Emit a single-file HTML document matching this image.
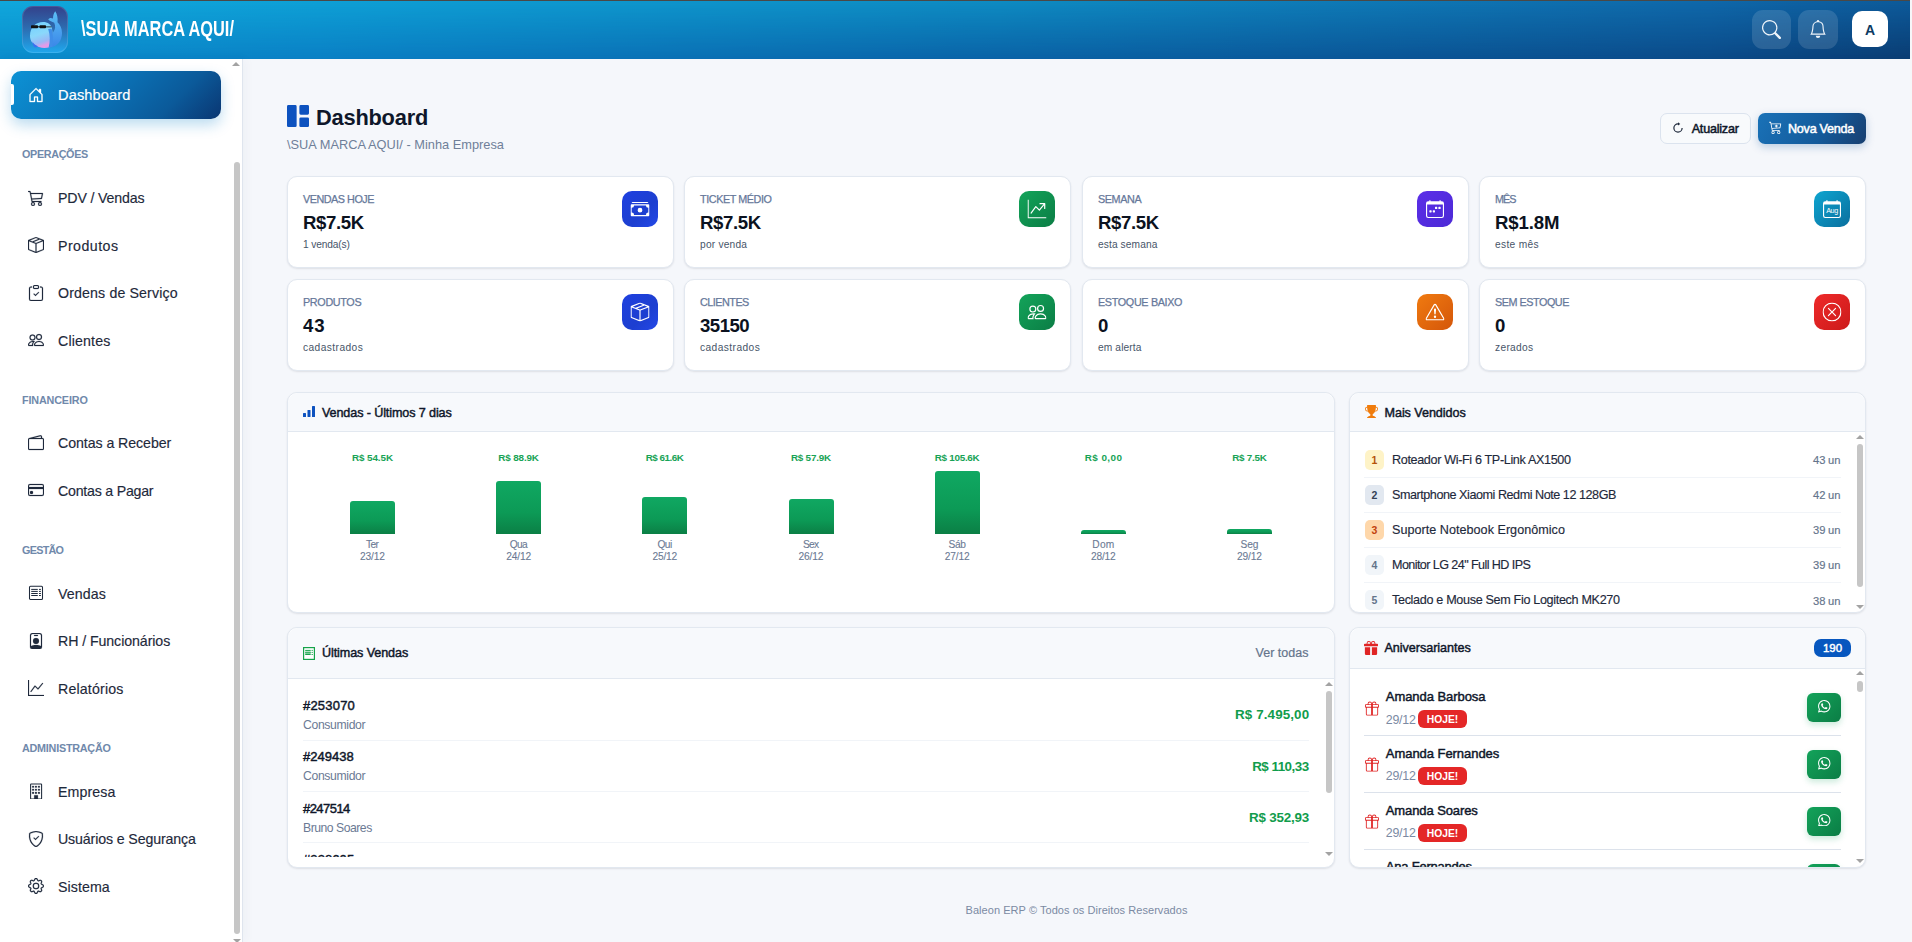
<!DOCTYPE html>
<html lang="pt-br">
<head>
<meta charset="utf-8">
<title>Dashboard</title>
<style>
*{box-sizing:border-box;margin:0;padding:0}
html,body{width:1912px;height:942px;overflow:hidden}
body{font-family:"Liberation Sans",sans-serif;background:#f5f7fb;color:#0f172a;position:relative}
.abs{position:absolute}
.t{position:absolute;white-space:nowrap}
svg{display:block}
#topline{left:0;top:0;width:1912px;height:1px;background:#4a4846}
#rstrip{left:1910px;top:0;width:2px;height:942px;background:#f6f7f9}
#header{left:0;top:1px;width:1910px;height:58px;background:linear-gradient(90deg,#10a8dc 0%,#0ea0d6 16.7%,#0e8bc2 52.3%,#0f68aa 89.5%,#0d5a9a 100%)}
#header:before{content:'';position:absolute;left:0;top:0;width:100%;height:100%;background:linear-gradient(90deg,#0b8ccc 0%,#0a7fc4 16.7%,#0a62a6 52.3%,#0b4a88 89.5%,#0a3c72 100%);-webkit-mask-image:linear-gradient(180deg,transparent 0%,#000 100%);mask-image:linear-gradient(180deg,transparent 0%,#000 100%)}
#sidebar{left:0;top:59px;width:243px;height:883px;background:#fff;border-right:1px solid #dfe5ee;box-shadow:3px 0 10px rgba(30,50,90,.035)}
.logo{left:22px;top:5px;width:46px;height:47px;border-radius:11px;background:linear-gradient(180deg,#34408a 0%,#2d6aae 45%,#1fa8ee 100%);overflow:hidden;box-shadow:0 0 0 1px rgba(255,255,255,.12) inset}
.brand{left:81px;top:15px;font-size:22px;font-weight:700;color:#fff;white-space:nowrap;transform:scaleX(.745);transform-origin:0 0}
.hbtn{top:9px;width:39px;height:39px;border-radius:11px;background:rgba(255,255,255,.13)}
.hbtn svg{position:absolute;left:50%;top:50%;transform:translate(-50%,-50%)}
.avatar{left:1852px;top:10px;width:36px;height:36px;border-radius:10px;background:#fff;color:#0c3a62;font-weight:700;font-size:14px;text-align:center;line-height:38px}
.navact{left:11px;top:71px;width:210px;height:48px;border-radius:10px;background:linear-gradient(135deg,#0c92d5 0%,#0b72b6 45%,#0b5a9a 75%,#0a3672 100%);box-shadow:0 6px 14px rgba(14,130,200,.28)}
.navbar{left:11px;top:84px;width:3px;height:21px;background:#fff;border-radius:0 2px 2px 0}
.ico{position:absolute}
.card{position:absolute;background:#fff;border:1px solid #e2e8f0;border-radius:10px;box-shadow:0 1px 2px rgba(15,23,42,.10)}
.sib{position:absolute;width:36px;height:36px;border-radius:10px}
.sib svg{position:absolute;left:50%;top:50%;transform:translate(-50%,-50%)}
.chead{position:absolute;left:0;top:0;right:0;background:#f7f9fc;border-bottom:1px solid #e2e8f0;border-radius:10px 10px 0 0}
.sbar{position:absolute;background:#c6c6c6;border-radius:3px}
.arr{position:absolute;width:0;height:0;border-left:4px solid transparent;border-right:4px solid transparent}
.arr.up{border-bottom:4px solid #a3a3a3}
.arr.dn{border-top:4px solid #a3a3a3}
</style>
</head>
<body>
<div id="topline" class="abs"></div>
<div id="header" class="abs">
<div class="abs logo"><svg width="46" height="47" viewBox="0 0 46 47">
<defs><linearGradient id="wf" x1="0" y1="0" x2=".3" y2="1"><stop offset="0" stop-color="#6fd0ff"/><stop offset=".55" stop-color="#8ad8fb"/><stop offset=".85" stop-color="#9bb8f5"/><stop offset="1" stop-color="#e29be8"/></linearGradient>
<linearGradient id="wt" x1="0" y1="0" x2="0" y2="1"><stop offset="0" stop-color="#5cc0f5"/><stop offset="1" stop-color="#3a86e8"/></linearGradient></defs>
<path d="M28 41.2 C36 40.5 40 34 40 27 C40 22 38 18.5 35.5 16.2 C36 12 35.2 8 33.2 5.3 C31.6 7.5 31 10 31 12.6 C29 11.6 27 12 26.2 13.6 C27.6 15.2 30 15.8 32.2 16.8 C33.6 20 33.6 23.5 31 26.5 Z" fill="url(#wt)"/>
<path d="M8 30 C8 21 14 16 21 16 C26 16 29 18.5 30 22.5 L30.5 27 C30.2 33 29.2 38 27.5 41.3 C24 42.2 20 42.2 17 41 C11 39 8 35 8 30 Z" fill="url(#wf)"/>
<path d="M26.2 23 C28.2 29 28.2 36 26.6 41.4 L30.4 41 C31.4 35 31.4 28 29.6 22.5 Z" fill="#3f8ee8"/>
<path d="M10.5 35.5 C10.5 39 11.8 41 14 41.6 L16 40.2 C13 39 11.5 37.5 10.5 35.5 Z" fill="#3b6ff0"/>
<rect x="9" y="19.3" width="7" height="3" rx=".8" fill="#111"/><rect x="17.5" y="19.3" width="6.5" height="3" rx=".8" fill="#111"/><rect x="15.5" y="20.3" width="2.5" height="1" fill="#111"/><rect x="23.5" y="20.5" width="6" height=".8" fill="#111"/>
</svg></div>
<div class="abs brand">\SUA MARCA AQUI/</div>
<div class="abs hbtn" style="left:1752px"><svg style="left:10px;top:9.5px;transform:none" width="19" height="19" viewBox="0 0 16 16"><path fill="#eef4fa" d="M11.742 10.344a6.5 6.5 0 1 0-1.397 1.398h-.001q.044.06.098.115l3.85 3.85a1 1 0 0 0 1.415-1.414l-3.85-3.85a1 1 0 0 0-.115-.1zM12 6.5a5.5 5.5 0 1 1-11 0 5.5 5.5 0 0 1 11 0"/></svg></div>
<div class="abs hbtn" style="left:1798px;width:40px"><svg style="left:11px;top:10px;transform:none" width="18" height="18" viewBox="0 0 16 16"><path fill="#eef4fa" d="M8 16a2 2 0 0 0 2-2H6a2 2 0 0 0 2 2M8 1.918l-.797.161A4 4 0 0 0 4 6c0 .628-.134 2.197-.459 3.742-.16.767-.376 1.566-.663 2.258h10.244c-.287-.692-.502-1.49-.663-2.258C12.134 8.197 12 6.628 12 6a4 4 0 0 0-3.203-3.92zM14.22 12c.223.447.481.801.78 1H1c.299-.199.557-.553.78-1C2.68 10.2 3 6.88 3 6c0-2.42 1.72-4.44 4.005-4.901a1 1 0 1 1 1.99 0A5 5 0 0 1 13 6c0 .88.32 4.2 1.22 6"/></svg></div>
<div class="abs avatar">A</div>
</div>
<div id="sidebar" class="abs"></div>
<div class="abs navact"></div><div class="abs navbar"></div>
<svg class="ico" style="left:28px;top:86.5px" width="16" height="16" viewBox="0 0 16 16"><path stroke="#fff" stroke-width="0.35" fill="#fff" d="M8.354 1.146a.5.5 0 0 0-.708 0l-6 6A.5.5 0 0 0 1.5 7.5v7a.5.5 0 0 0 .5.5h4.5a.5.5 0 0 0 .5-.5v-4h2v4a.5.5 0 0 0 .5.5H14a.5.5 0 0 0 .5-.5v-7a.5.5 0 0 0-.146-.354L13 5.793V2.5a.5.5 0 0 0-.5-.5h-1a.5.5 0 0 0-.5.5v1.293zM2.5 14V7.707l5.5-5.5 5.5 5.5V14H10v-4a.5.5 0 0 0-.5-.5h-3a.5.5 0 0 0-.5.5v4z"/></svg>
<div class="t" style="left:58px;top:88.29px;font-size:14.6px;line-height:14.6px;font-weight:400;color:#fff;letter-spacing:0.125px;-webkit-text-stroke:.2px #fff;">Dashboard</div>
<div class="t" style="left:22px;top:148.82px;font-size:10.8px;line-height:10.8px;font-weight:700;color:#7089ab;letter-spacing:-0.35px;">OPERAÇÕES</div>
<svg class="ico" style="left:28px;top:190px" width="16" height="16" viewBox="0 0 16 16"><path stroke="#1e293b" stroke-width="0.2" fill="#1e293b" d="M0 1.5A.5.5 0 0 1 .5 1H2a.5.5 0 0 1 .485.379L2.89 3H14.5a.5.5 0 0 1 .49.598l-1 5a.5.5 0 0 1-.465.401l-9.397.472L4.415 11H13a.5.5 0 0 1 0 1H4a.5.5 0 0 1-.491-.408L2.01 3.607 1.61 2H.5a.5.5 0 0 1-.5-.5M3.102 4l.84 4.479 9.144-.459L13.89 4zM5 12a2 2 0 1 0 0 4 2 2 0 0 0 0-4m7 0a2 2 0 1 0 0 4 2 2 0 0 0 0-4m-7 1a1 1 0 1 1 0 2 1 1 0 0 1 0-2m7 0a1 1 0 1 1 0 2 1 1 0 0 1 0-2"/></svg>
<div class="t" style="left:58px;top:191.43px;font-size:14.2px;line-height:14.2px;font-weight:400;color:#1e293b;letter-spacing:-0.155px;-webkit-text-stroke:.15px #1e293b;">PDV / Vendas</div>
<svg class="ico" style="left:28px;top:237px" width="16" height="16" viewBox="0 0 16 16"><path stroke="#1e293b" stroke-width="0.2" fill="#1e293b" d="M8.186 1.113a.5.5 0 0 0-.372 0L1.846 3.5l2.404.961L10.404 2zm3.564 1.426L5.596 5 8 5.961 14.154 3.5zm3.25 1.7-6.5 2.6v7.922l6.5-2.6V4.24zM7.5 14.762V6.838L1 4.239v7.923zM7.443.184a1.5 1.5 0 0 1 1.114 0l7.129 2.852A.5.5 0 0 1 16 3.5v8.662a1 1 0 0 1-.629.928l-7.185 2.874a.5.5 0 0 1-.372 0L.63 13.09a1 1 0 0 1-.63-.928V3.5a.5.5 0 0 1 .314-.464z"/></svg>
<div class="t" style="left:58px;top:238.93px;font-size:14.2px;line-height:14.2px;font-weight:400;color:#1e293b;letter-spacing:0.457px;-webkit-text-stroke:.15px #1e293b;">Produtos</div>
<svg class="ico" style="left:28px;top:285px" width="16" height="16" viewBox="0 0 16 16"><path stroke="#1e293b" stroke-width="0.2" fill="#1e293b" d="M10.854 7.146a.5.5 0 0 1 0 .708l-3 3a.5.5 0 0 1-.708 0l-1.5-1.5a.5.5 0 1 1 .708-.708L7.5 9.793l2.646-2.647a.5.5 0 0 1 .708 0"/><path stroke="#1e293b" stroke-width="0.2" fill="#1e293b" d="M4 1.5H3a2 2 0 0 0-2 2V14a2 2 0 0 0 2 2h10a2 2 0 0 0 2-2V3.5a2 2 0 0 0-2-2h-1v1h1a1 1 0 0 1 1 1V14a1 1 0 0 1-1 1H3a1 1 0 0 1-1-1V3.5a1 1 0 0 1 1-1h1z"/><path stroke="#1e293b" stroke-width="0.2" fill="#1e293b" d="M9.5 1a.5.5 0 0 1 .5.5v1a.5.5 0 0 1-.5.5h-3a.5.5 0 0 1-.5-.5v-1a.5.5 0 0 1 .5-.5zm-3-1A1.5 1.5 0 0 0 5 1.5v1A1.5 1.5 0 0 0 6.5 4h3A1.5 1.5 0 0 0 11 2.5v-1A1.5 1.5 0 0 0 9.5 0z"/></svg>
<div class="t" style="left:58px;top:286.43px;font-size:14.2px;line-height:14.2px;font-weight:400;color:#1e293b;letter-spacing:0.131px;-webkit-text-stroke:.15px #1e293b;">Ordens de Serviço</div>
<svg class="ico" style="left:28px;top:332px" width="16" height="16" viewBox="0 0 16 16"><path stroke="#1e293b" stroke-width="0.2" fill="#1e293b" d="M15 14s1 0 1-1-1-4-5-4-5 3-5 4 1 1 1 1zm-7.978-1L7 12.996c.001-.264.167-1.03.76-1.72C8.312 10.629 9.282 10 11 10c1.717 0 2.687.63 3.24 1.276.593.69.758 1.457.76 1.72l-.008.002-.014.002zM11 7a2 2 0 1 0 0-4 2 2 0 0 0 0 4m3-2a3 3 0 1 1-6 0 3 3 0 0 1 6 0M6.936 9.28a6 6 0 0 0-1.23-.247A7 7 0 0 0 5 9c-4 0-5 3-5 4q0 1 1 1h4.216A2.24 2.24 0 0 1 5 13c0-1.01.377-2.042 1.09-2.904.243-.294.526-.569.846-.816M4.92 10A5.5 5.5 0 0 0 4 13H1c0-.26.164-1.03.76-1.724.545-.636 1.492-1.256 3.16-1.275ZM1.5 5.5a3 3 0 1 1 6 0 3 3 0 0 1-6 0m3-2a2 2 0 1 0 0 4 2 2 0 0 0 0-4"/></svg>
<div class="t" style="left:58px;top:333.93px;font-size:14.2px;line-height:14.2px;font-weight:400;color:#1e293b;letter-spacing:0.143px;-webkit-text-stroke:.15px #1e293b;">Clientes</div>
<div class="t" style="left:22px;top:394.82px;font-size:10.8px;line-height:10.8px;font-weight:700;color:#7089ab;letter-spacing:-0.156px;">FINANCEIRO</div>
<svg class="ico" style="left:28px;top:435px" width="16" height="16" viewBox="0 0 16 16"><path stroke="#1e293b" stroke-width="0.2" fill="#1e293b" d="M12.136.326A1.5 1.5 0 0 1 14 1.78V3h.5A1.5 1.5 0 0 1 16 4.5v9a1.5 1.5 0 0 1-1.5 1.5h-13A1.5 1.5 0 0 1 0 13.5v-9a1.5 1.5 0 0 1 1.432-1.499zM5.562 3H13V1.78a.5.5 0 0 0-.621-.484zM1.5 4a.5.5 0 0 0-.5.5v9a.5.5 0 0 0 .5.5h13a.5.5 0 0 0 .5-.5v-9a.5.5 0 0 0-.5-.5z"/></svg>
<div class="t" style="left:58px;top:436.43px;font-size:14.2px;line-height:14.2px;font-weight:400;color:#1e293b;letter-spacing:-0.073px;-webkit-text-stroke:.15px #1e293b;">Contas a Receber</div>
<svg class="ico" style="left:28px;top:482px" width="16" height="16" viewBox="0 0 16 16"><path stroke="#1e293b" stroke-width="0.2" fill="#1e293b" d="M0 4a2 2 0 0 1 2-2h12a2 2 0 0 1 2 2v8a2 2 0 0 1-2 2H2a2 2 0 0 1-2-2zm2-1a1 1 0 0 0-1 1v1h14V4a1 1 0 0 0-1-1zm13 4H1v5a1 1 0 0 0 1 1h12a1 1 0 0 0 1-1z"/><path stroke="#1e293b" stroke-width="0.2" fill="#1e293b" d="M2 10a1 1 0 0 1 1-1h1a1 1 0 0 1 1 1v1a1 1 0 0 1-1 1H3a1 1 0 0 1-1-1z"/></svg>
<div class="t" style="left:58px;top:483.93px;font-size:14.2px;line-height:14.2px;font-weight:400;color:#1e293b;letter-spacing:-0.231px;-webkit-text-stroke:.15px #1e293b;">Contas a Pagar</div>
<div class="t" style="left:22px;top:544.82px;font-size:10.8px;line-height:10.8px;font-weight:700;color:#7089ab;letter-spacing:-0.72px;">GESTÃO</div>
<svg class="ico" style="left:28px;top:585px" width="16" height="16" viewBox="0 0 16 16"><rect x="1.5" y="1.3" width="13" height="13.1" rx="1" fill="none" stroke="#1e293b" stroke-width="1.05"/><path stroke="#1e293b" stroke-width="1" stroke-linecap="round" d="M3.6 4.4h5.8M3.6 6.4h5.8M3.6 8.5h5.8M3.6 10.5h5.8M11.4 4.4h1.1M11.4 6.4h1.1M11.4 8.5h1.1M11.4 10.5h1.1"/></svg>
<div class="t" style="left:58px;top:586.93px;font-size:14.2px;line-height:14.2px;font-weight:400;color:#1e293b;letter-spacing:0.1px;-webkit-text-stroke:.15px #1e293b;">Vendas</div>
<svg class="ico" style="left:28px;top:633px" width="16" height="16" viewBox="0 0 16 16"><path stroke="#1e293b" stroke-width="0.2" fill="#1e293b" d="M6.5 2a.5.5 0 0 0 0 1h3a.5.5 0 0 0 0-1zM11 8a3 3 0 1 1-6 0 3 3 0 0 1 6 0"/><path stroke="#1e293b" stroke-width="0.2" fill="#1e293b" d="M4.5 0A2.5 2.5 0 0 0 2 2.5V14a2 2 0 0 0 2 2h8a2 2 0 0 0 2-2V2.5A2.5 2.5 0 0 0 11.5 0zM3 2.5A1.5 1.5 0 0 1 4.5 1h7A1.5 1.5 0 0 1 13 2.5v10.795a4.2 4.2 0 0 0-.776-.492C11.392 12.387 10.063 12 8 12s-3.392.387-4.224.803a4.2 4.2 0 0 0-.776.492z"/></svg>
<div class="t" style="left:58px;top:634.43px;font-size:14.2px;line-height:14.2px;font-weight:400;color:#1e293b;letter-spacing:-0.081px;-webkit-text-stroke:.15px #1e293b;">RH / Funcionários</div>
<svg class="ico" style="left:28px;top:680px" width="16" height="16" viewBox="0 0 16 16"><path stroke="#1e293b" stroke-width="0.2" fill="#1e293b" fill-rule="evenodd" d="M0 0h1v15h15v1H0zm14.817 3.113a.5.5 0 0 1 .07.704l-4.5 5.5a.5.5 0 0 1-.74.037L7.06 6.767l-3.656 5.027a.5.5 0 0 1-.808-.588l4-5.5a.5.5 0 0 1 .758-.06l2.609 2.61 4.15-5.073a.5.5 0 0 1 .704-.07"/></svg>
<div class="t" style="left:58px;top:681.93px;font-size:14.2px;line-height:14.2px;font-weight:400;color:#1e293b;letter-spacing:0.167px;-webkit-text-stroke:.15px #1e293b;">Relatórios</div>
<div class="t" style="left:22px;top:742.82px;font-size:10.8px;line-height:10.8px;font-weight:700;color:#7089ab;letter-spacing:-0.242px;">ADMINISTRAÇÃO</div>
<svg class="ico" style="left:28px;top:783px" width="16" height="16" viewBox="0 0 16 16"><rect x="2.6" y="0.9" width="11" height="15" rx=".6" fill="none" stroke="#1e293b" stroke-width="1.05"/><path stroke="#1e293b" stroke-width="0.2" fill="#1e293b" d="M4.2 2.9h1.7v1.7H4.2zM7.1 2.9h1.7v1.7H7.1zM10.1 2.9h1.7v1.7h-1.7zM4.2 5.9h1.7v1.7H4.2zM7.1 5.9h1.7v1.7H7.1zM10.1 5.9h1.7v1.7h-1.7zM4.2 9h1.7v1.7H4.2zM7.1 9h1.7v1.7H7.1zM10.1 9h1.7v1.7h-1.7zM6.2 12.2h3.7v3.7H6.2z"/></svg>
<div class="t" style="left:58px;top:784.93px;font-size:14.2px;line-height:14.2px;font-weight:400;color:#1e293b;letter-spacing:0.083px;-webkit-text-stroke:.15px #1e293b;">Empresa</div>
<svg class="ico" style="left:28px;top:831px" width="16" height="16" viewBox="0 0 16 16"><path stroke="#1e293b" stroke-width="0.2" fill="#1e293b" d="M5.338 1.59a61 61 0 0 0-2.837.856.48.48 0 0 0-.328.39c-.554 4.157.726 7.19 2.253 9.188a10.7 10.7 0 0 0 2.287 2.233c.346.244.652.42.893.533q.18.085.293.118a1 1 0 0 0 .101.025 1 1 0 0 0 .1-.025q.114-.034.294-.118c.24-.113.547-.29.893-.533a10.7 10.7 0 0 0 2.287-2.233c1.527-1.997 2.807-5.031 2.253-9.188a.48.48 0 0 0-.328-.39c-.651-.213-1.75-.56-2.837-.855C9.552 1.29 8.531 1.067 8 1.067c-.53 0-1.552.223-2.662.524zM5.072.56C6.157.265 7.31 0 8 0s1.843.265 2.928.56c1.11.3 2.229.655 2.887.87a1.54 1.54 0 0 1 1.044 1.262c.596 4.477-.787 7.795-2.465 9.99a11.8 11.8 0 0 1-2.517 2.453 7 7 0 0 1-1.048.625c-.28.132-.581.24-.829.24s-.548-.108-.829-.24a7 7 0 0 1-1.048-.625 11.8 11.8 0 0 1-2.517-2.453C1.928 10.487.545 7.169 1.141 2.692A1.54 1.54 0 0 1 2.185 1.43 63 63 0 0 1 5.072.56"/><path stroke="#1e293b" stroke-width="0.2" fill="#1e293b" d="M10.854 5.146a.5.5 0 0 1 0 .708l-3 3a.5.5 0 0 1-.708 0l-1.5-1.5a.5.5 0 1 1 .708-.708L7.5 7.793l2.646-2.647a.5.5 0 0 1 .708 0"/></svg>
<div class="t" style="left:58px;top:832.43px;font-size:14.2px;line-height:14.2px;font-weight:400;color:#1e293b;letter-spacing:-0.132px;-webkit-text-stroke:.15px #1e293b;">Usuários e Segurança</div>
<svg class="ico" style="left:28px;top:878px" width="16" height="16" viewBox="0 0 16 16"><path stroke="#1e293b" stroke-width="0.2" fill="#1e293b" d="M8 4.754a3.246 3.246 0 1 0 0 6.492 3.246 3.246 0 0 0 0-6.492M5.754 8a2.246 2.246 0 1 1 4.492 0 2.246 2.246 0 0 1-4.492 0"/><path stroke="#1e293b" stroke-width="0.2" fill="#1e293b" d="M9.796 1.343c-.527-1.79-3.065-1.79-3.592 0l-.094.319a.873.873 0 0 1-1.255.52l-.292-.16c-1.64-.892-3.433.902-2.54 2.541l.159.292a.873.873 0 0 1-.52 1.255l-.319.094c-1.79.527-1.79 3.065 0 3.592l.319.094a.873.873 0 0 1 .52 1.255l-.16.292c-.892 1.64.901 3.434 2.541 2.54l.292-.159a.873.873 0 0 1 1.255.52l.094.319c.527 1.79 3.065 1.79 3.592 0l.094-.319a.873.873 0 0 1 1.255-.52l.292.16c1.64.893 3.434-.902 2.54-2.541l-.159-.292a.873.873 0 0 1 .52-1.255l.319-.094c1.79-.527 1.79-3.065 0-3.592l-.319-.094a.873.873 0 0 1-.52-1.255l.16-.292c.893-1.64-.902-3.433-2.541-2.54l-.292.159a.873.873 0 0 1-1.255-.52zm-2.633.283c.246-.835 1.428-.835 1.674 0l.094.319a1.873 1.873 0 0 0 2.693 1.115l.291-.16c.764-.415 1.6.42 1.184 1.185l-.159.292a1.873 1.873 0 0 0 1.116 2.692l.318.094c.835.246.835 1.428 0 1.674l-.319.094a1.873 1.873 0 0 0-1.115 2.693l.16.291c.415.764-.42 1.6-1.185 1.184l-.291-.159a1.873 1.873 0 0 0-2.693 1.116l-.094.318c-.246.835-1.428.835-1.674 0l-.094-.319a1.873 1.873 0 0 0-2.692-1.115l-.292.16c-.764.415-1.6-.42-1.184-1.185l.159-.291A1.873 1.873 0 0 0 1.945 8.93l-.319-.094c-.835-.246-.835-1.428 0-1.674l.319-.094A1.873 1.873 0 0 0 3.06 4.377l-.16-.292c-.415-.764.42-1.6 1.185-1.184l.292.159a1.873 1.873 0 0 0 2.692-1.115z"/></svg>
<div class="t" style="left:58px;top:879.93px;font-size:14.2px;line-height:14.2px;font-weight:400;color:#1e293b;letter-spacing:0.067px;-webkit-text-stroke:.15px #1e293b;">Sistema</div>
<div class="arr up" style="left:232px;top:62px"></div>
<div class="sbar" style="left:234px;top:162px;width:6px;height:772px"></div>
<div class="arr dn" style="left:233px;top:939px"></div>
<svg class="ico" style="left:287px;top:105px" width="22" height="22" viewBox="0 0 16 16"><path fill="#0d52bf" d="M0 1a1 1 0 0 1 1-1h5a1 1 0 0 1 1 1v14a1 1 0 0 1-1 1H1a1 1 0 0 1-1-1zm9 0a1 1 0 0 1 1-1h5a1 1 0 0 1 1 1v5a1 1 0 0 1-1 1h-5a1 1 0 0 1-1-1zm0 9a1 1 0 0 1 1-1h5a1 1 0 0 1 1 1v5a1 1 0 0 1-1 1h-5a1 1 0 0 1-1-1z"/></svg>
<div class="t" style="left:316px;top:106.77px;font-size:21.8px;line-height:21.8px;font-weight:700;color:#0f172a;letter-spacing:-0.2px;">Dashboard</div>
<div class="t" style="left:287px;top:138.92px;font-size:12.8px;line-height:12.8px;font-weight:400;color:#6f7f99;letter-spacing:0px;">\SUA MARCA AQUI/ - Minha Empresa</div>
<div class="abs" style="left:1660px;top:113px;width:91px;height:31px;border:1px solid #dbe3ee;border-radius:7px;background:#f8fafc"></div>
<svg class="ico" style="left:1672px;top:122px" width="12" height="12" viewBox="0 0 16 16"><path fill="none" stroke="#1e293b" stroke-width="1.6" d="M13.5 8A5.5 5.5 0 1 1 8 2.5"/><path fill="#1e293b" d="M8 0.2v4.6l3-2.3z"/></svg>
<div class="t" style="left:1691.7px;top:122.59px;font-size:12.6px;line-height:12.6px;font-weight:400;color:#0f172a;letter-spacing:-0.225px;-webkit-text-stroke:.5px #0f172a;">Atualizar</div>
<div class="abs" style="left:1758px;top:113px;width:108px;height:31px;border-radius:7px;background:linear-gradient(120deg,#1a72b8,#145a9a 60%,#183f70);box-shadow:0 3px 8px rgba(13,80,150,.25)"></div>
<svg class="ico" style="left:1769px;top:121px" width="13" height="13" viewBox="0 0 16 16"><path fill="#fff" d="M0 1.5A.5.5 0 0 1 .5 1H2a.5.5 0 0 1 .485.379L2.89 3H14.5a.5.5 0 0 1 .49.598l-1 5a.5.5 0 0 1-.465.401l-9.397.472L4.415 11H13a.5.5 0 0 1 0 1H4a.5.5 0 0 1-.491-.408L2.01 3.607 1.61 2H.5a.5.5 0 0 1-.5-.5M3.102 4l.84 4.479 9.144-.459L13.89 4zM5 12a2 2 0 1 0 0 4 2 2 0 0 0 0-4m7 0a2 2 0 1 0 0 4 2 2 0 0 0 0-4m-7 1a1 1 0 1 1 0 2 1 1 0 0 1 0-2m7 0a1 1 0 1 1 0 2 1 1 0 0 1 0-2"/><path stroke="#fff" stroke-width="1.3" d="M9 4.5v3.5M7.2 6.2h3.6"/></svg>
<div class="t" style="left:1788px;top:122.59px;font-size:12.6px;line-height:12.6px;font-weight:400;color:#fff;letter-spacing:-0.256px;-webkit-text-stroke:.5px #fff;">Nova Venda</div>
<div class="card" style="left:287.00px;top:176px;width:387px;height:92px"></div>
<div class="sib" style="left:622.00px;top:191.2px;background:linear-gradient(135deg,#1e40e0,#1d3fd0 60%,#2448e8)"><svg width="19" height="19" viewBox="0 0 16 16"><path fill="#fff" d="M1 3a1 1 0 0 1 1-1h12a1 1 0 0 1 1 1zm7 8a2 2 0 1 0 0-4 2 2 0 0 0 0 4"/><path fill="#fff" d="M0 5a1 1 0 0 1 1-1h14a1 1 0 0 1 1 1v8a1 1 0 0 1-1 1H1a1 1 0 0 1-1-1zm3 0a2 2 0 0 1-2 2v4a2 2 0 0 1 2 2h10a2 2 0 0 1 2-2V7a2 2 0 0 1-2-2z"/></svg></div>
<div class="t" style="left:303px;top:193.62px;font-size:10.8px;line-height:10.8px;font-weight:400;color:#66789a;letter-spacing:-0.47px;-webkit-text-stroke:.25px #66789a;">VENDAS HOJE</div>
<div class="t" style="left:303px;top:213.79px;font-size:18.6px;line-height:18.6px;font-weight:700;color:#0b1220;letter-spacing:-0.38px;">R$7.5K</div>
<div class="t" style="left:303px;top:239.93px;font-size:10.2px;line-height:10.2px;font-weight:400;color:#475569;letter-spacing:-0.14px;">1 venda(s)</div>
<div class="card" style="left:684.00px;top:176px;width:387px;height:92px"></div>
<div class="sib" style="left:1019.00px;top:191.2px;background:linear-gradient(135deg,#13a45a,#0b7d45)"><svg width="19" height="19" viewBox="0 0 16 16"><path fill="#fff" fill-rule="evenodd" d="M0 0h1v15h15v1H0zm10 3.5a.5.5 0 0 1 .5-.5h4a.5.5 0 0 1 .5.5v4a.5.5 0 0 1-1 0V4.9l-3.613 4.417a.5.5 0 0 1-.74.037L7.06 6.767l-3.656 5.027a.5.5 0 0 1-.808-.588l4-5.5a.5.5 0 0 1 .758-.06l2.609 2.61L13.445 4H10.5a.5.5 0 0 1-.5-.5"/></svg></div>
<div class="t" style="left:700px;top:193.62px;font-size:10.8px;line-height:10.8px;font-weight:400;color:#66789a;letter-spacing:-0.42px;-webkit-text-stroke:.25px #66789a;">TICKET MÉDIO</div>
<div class="t" style="left:700px;top:213.79px;font-size:18.6px;line-height:18.6px;font-weight:700;color:#0b1220;letter-spacing:-0.38px;">R$7.5K</div>
<div class="t" style="left:700px;top:239.93px;font-size:10.2px;line-height:10.2px;font-weight:400;color:#475569;letter-spacing:0.21px;">por venda</div>
<div class="card" style="left:1082.00px;top:176px;width:387px;height:92px"></div>
<div class="sib" style="left:1417.00px;top:191.2px;background:linear-gradient(135deg,#5b2ee8,#4c2ad6)"><svg width="18" height="18" viewBox="0 0 16 16"><path fill="#fff" d="M11 6.5a.5.5 0 0 1 .5-.5h1a.5.5 0 0 1 .5.5v1a.5.5 0 0 1-.5.5h-1a.5.5 0 0 1-.5-.5zm-3 0a.5.5 0 0 1 .5-.5h1a.5.5 0 0 1 .5.5v1a.5.5 0 0 1-.5.5h-1a.5.5 0 0 1-.5-.5zm-5 3a.5.5 0 0 1 .5-.5h1a.5.5 0 0 1 .5.5v1a.5.5 0 0 1-.5.5h-1a.5.5 0 0 1-.5-.5zm3 0a.5.5 0 0 1 .5-.5h1a.5.5 0 0 1 .5.5v1a.5.5 0 0 1-.5.5h-1a.5.5 0 0 1-.5-.5z"/><path fill="#fff" d="M3.5 0a.5.5 0 0 1 .5.5V1h8V.5a.5.5 0 0 1 1 0V1h1a2 2 0 0 1 2 2v11a2 2 0 0 1-2 2H2a2 2 0 0 1-2-2V3a2 2 0 0 1 2-2h1V.5a.5.5 0 0 1 .5-.5M1 4v10a1 1 0 0 0 1 1h12a1 1 0 0 0 1-1V4z"/></svg></div>
<div class="t" style="left:1098px;top:193.62px;font-size:10.8px;line-height:10.8px;font-weight:400;color:#66789a;letter-spacing:-0.4px;-webkit-text-stroke:.25px #66789a;">SEMANA</div>
<div class="t" style="left:1098px;top:213.79px;font-size:18.6px;line-height:18.6px;font-weight:700;color:#0b1220;letter-spacing:-0.38px;">R$7.5K</div>
<div class="t" style="left:1098px;top:239.93px;font-size:10.2px;line-height:10.2px;font-weight:400;color:#475569;letter-spacing:0.1px;">esta semana</div>
<div class="card" style="left:1479.00px;top:176px;width:387px;height:92px"></div>
<div class="sib" style="left:1814.00px;top:191.2px;background:linear-gradient(135deg,#0ea5d0,#0a6f9e)"><svg width="18" height="18" viewBox="0 0 16 16"><path fill="#fff" d="M3.5 0a.5.5 0 0 1 .5.5V1h8V.5a.5.5 0 0 1 1 0V1h1a2 2 0 0 1 2 2v11a2 2 0 0 1-2 2H2a2 2 0 0 1-2-2V3a2 2 0 0 1 2-2h1V.5a.5.5 0 0 1 .5-.5M1 4v10a1 1 0 0 0 1 1h12a1 1 0 0 0 1-1V4z"/><text x="8" y="11.3" font-size="6.4" font-family="Liberation Sans" fill="#fff" text-anchor="middle" letter-spacing="-.35">Aug</text></svg></div>
<div class="t" style="left:1495px;top:193.62px;font-size:10.8px;line-height:10.8px;font-weight:400;color:#66789a;letter-spacing:-1.0px;-webkit-text-stroke:.25px #66789a;">MÊS</div>
<div class="t" style="left:1495px;top:213.79px;font-size:18.6px;line-height:18.6px;font-weight:700;color:#0b1220;letter-spacing:-0.12px;">R$1.8M</div>
<div class="t" style="left:1495px;top:239.93px;font-size:10.2px;line-height:10.2px;font-weight:400;color:#475569;letter-spacing:0.31px;">este mês</div>
<div class="card" style="left:287.00px;top:279px;width:387px;height:92px"></div>
<div class="sib" style="left:622.00px;top:294.2px;background:linear-gradient(135deg,#1e40e0,#1d3fd0 60%,#2448e8)"><svg width="19" height="19" viewBox="0 0 16 16"><path fill="#fff" d="M8.186 1.113a.5.5 0 0 0-.372 0L1.846 3.5l2.404.961L10.404 2zm3.564 1.426L5.596 5 8 5.961 14.154 3.5zm3.25 1.7-6.5 2.6v7.922l6.5-2.6V4.24zM7.5 14.762V6.838L1 4.239v7.923zM7.443.184a1.5 1.5 0 0 1 1.114 0l7.129 2.852A.5.5 0 0 1 16 3.5v8.662a1 1 0 0 1-.629.928l-7.185 2.874a.5.5 0 0 1-.372 0L.63 13.09a1 1 0 0 1-.63-.928V3.5a.5.5 0 0 1 .314-.464z"/></svg></div>
<div class="t" style="left:303px;top:296.62px;font-size:10.8px;line-height:10.8px;font-weight:400;color:#66789a;letter-spacing:-0.34px;-webkit-text-stroke:.25px #66789a;">PRODUTOS</div>
<div class="t" style="left:303px;top:316.79px;font-size:18.6px;line-height:18.6px;font-weight:700;color:#0b1220;letter-spacing:0.8px;">43</div>
<div class="t" style="left:303px;top:342.93px;font-size:10.2px;line-height:10.2px;font-weight:400;color:#475569;letter-spacing:0.43px;">cadastrados</div>
<div class="card" style="left:684.00px;top:279px;width:387px;height:92px"></div>
<div class="sib" style="left:1019.00px;top:294.2px;background:linear-gradient(135deg,#13a45a,#0b7d45)"><svg width="19" height="19" viewBox="0 0 16 16"><path fill="#fff" d="M15 14s1 0 1-1-1-4-5-4-5 3-5 4 1 1 1 1zm-7.978-1L7 12.996c.001-.264.167-1.03.76-1.72C8.312 10.629 9.282 10 11 10c1.717 0 2.687.63 3.24 1.276.593.69.758 1.457.76 1.72l-.008.002-.014.002zM11 7a2 2 0 1 0 0-4 2 2 0 0 0 0 4m3-2a3 3 0 1 1-6 0 3 3 0 0 1 6 0M6.936 9.28a6 6 0 0 0-1.23-.247A7 7 0 0 0 5 9c-4 0-5 3-5 4q0 1 1 1h4.216A2.24 2.24 0 0 1 5 13c0-1.01.377-2.042 1.09-2.904.243-.294.526-.569.846-.816M4.92 10A5.5 5.5 0 0 0 4 13H1c0-.26.164-1.03.76-1.724.545-.636 1.492-1.256 3.16-1.275ZM1.5 5.5a3 3 0 1 1 6 0 3 3 0 0 1-6 0m3-2a2 2 0 1 0 0 4 2 2 0 0 0 0-4"/></svg></div>
<div class="t" style="left:700px;top:296.62px;font-size:10.8px;line-height:10.8px;font-weight:400;color:#66789a;letter-spacing:-0.5px;-webkit-text-stroke:.25px #66789a;">CLIENTES</div>
<div class="t" style="left:700px;top:316.79px;font-size:18.6px;line-height:18.6px;font-weight:700;color:#0b1220;letter-spacing:-0.5px;">35150</div>
<div class="t" style="left:700px;top:342.93px;font-size:10.2px;line-height:10.2px;font-weight:400;color:#475569;letter-spacing:0.43px;">cadastrados</div>
<div class="card" style="left:1082.00px;top:279px;width:387px;height:92px"></div>
<div class="sib" style="left:1417.00px;top:294.2px;background:linear-gradient(135deg,#f07a10,#d4560a)"><svg width="19" height="19" viewBox="0 0 16 16"><path fill="#fff" d="M7.938 2.016A.13.13 0 0 1 8.002 2a.13.13 0 0 1 .063.016.15.15 0 0 1 .054.057l6.857 11.667c.036.06.035.124.002.183a.2.2 0 0 1-.054.06.1.1 0 0 1-.066.017H1.146a.1.1 0 0 1-.066-.017.2.2 0 0 1-.054-.06.18.18 0 0 1 .002-.183L7.884 2.073a.15.15 0 0 1 .054-.057m1.044-.45a1.13 1.13 0 0 0-1.96 0L.165 13.233c-.457.778.091 1.767.98 1.767h13.713c.889 0 1.438-.99.98-1.767z"/><path fill="#fff" d="M7.002 12a1 1 0 1 1 2 0 1 1 0 0 1-2 0M7.1 5.995a.905.905 0 1 1 1.8 0l-.35 3.507a.552.552 0 0 1-1.1 0z"/></svg></div>
<div class="t" style="left:1098px;top:296.62px;font-size:10.8px;line-height:10.8px;font-weight:400;color:#66789a;letter-spacing:-0.34px;-webkit-text-stroke:.25px #66789a;">ESTOQUE BAIXO</div>
<div class="t" style="left:1098px;top:316.79px;font-size:18.6px;line-height:18.6px;font-weight:700;color:#0b1220;letter-spacing:0px;">0</div>
<div class="t" style="left:1098px;top:342.93px;font-size:10.2px;line-height:10.2px;font-weight:400;color:#475569;letter-spacing:0.12px;">em alerta</div>
<div class="card" style="left:1479.00px;top:279px;width:387px;height:92px"></div>
<div class="sib" style="left:1814.00px;top:294.2px;background:linear-gradient(135deg,#ee2a2a,#cc1a1a)"><svg width="19" height="19" viewBox="0 0 16 16"><path fill="#fff" d="M8 15A7 7 0 1 1 8 1a7 7 0 0 1 0 14m0 1A8 8 0 1 0 8 0a8 8 0 0 0 0 16"/><path fill="#fff" d="M4.646 4.646a.5.5 0 0 1 .708 0L8 7.293l2.646-2.647a.5.5 0 0 1 .708.708L8.707 8l2.647 2.646a.5.5 0 0 1-.708.708L8 8.707l-2.646 2.647a.5.5 0 0 1-.708-.708L7.293 8 4.646 5.354a.5.5 0 0 1 0-.708"/></svg></div>
<div class="t" style="left:1495px;top:296.62px;font-size:10.8px;line-height:10.8px;font-weight:400;color:#66789a;letter-spacing:-0.46px;-webkit-text-stroke:.25px #66789a;">SEM ESTOQUE</div>
<div class="t" style="left:1495px;top:316.79px;font-size:18.6px;line-height:18.6px;font-weight:700;color:#0b1220;letter-spacing:0px;">0</div>
<div class="t" style="left:1495px;top:342.93px;font-size:10.2px;line-height:10.2px;font-weight:400;color:#475569;letter-spacing:0.32px;">zerados</div>
<div class="card" style="left:287px;top:392px;width:1048px;height:221px;overflow:hidden"><div class="chead" style="height:39px"></div></div>
<svg class="ico" style="left:303px;top:406px" width="12" height="11" viewBox="0 0 12 11"><rect x="0" y="7" width="3" height="4" rx=".5" fill="#0d52bf"/><rect x="4.5" y="4" width="3" height="7" rx=".5" fill="#0d52bf"/><rect x="9" y="0" width="3" height="11" rx=".5" fill="#0d52bf"/></svg>
<div class="t" style="left:322px;top:406.59px;font-size:12.6px;line-height:12.6px;font-weight:400;color:#0f172a;letter-spacing:-0.114px;-webkit-text-stroke:.45px #0f172a;">Vendas - Últimos 7 dias</div>
<div class="t" style="left:calc(312.5px + -0.086px / 2);width:120px;text-align:center;top:452.98px;font-size:9.9px;line-height:9.9px;font-weight:700;color:#18a356;letter-spacing:-0.086px;">R$ 54.5K</div>
<div class="abs" style="left:350.00px;top:501px;width:45px;height:33px;border-radius:3px 3px 0 0;background:linear-gradient(180deg,#10a862 0%,#0c9a56 60%,#0b7f45 100%)"></div>
<div class="t" style="left:calc(342.5px + -0.6px / 2);width:60px;text-align:center;top:539.63px;font-size:10.2px;line-height:10.2px;font-weight:400;color:#6b7a94;letter-spacing:-0.6px;-webkit-text-stroke:.1px #6b7a94;">Ter</div>
<div class="t" style="left:calc(342.5px + -0.175px / 2);width:60px;text-align:center;top:552.43px;font-size:10.2px;line-height:10.2px;font-weight:400;color:#6b7a94;letter-spacing:-0.175px;-webkit-text-stroke:.1px #6b7a94;">23/12</div>
<div class="t" style="left:calc(458.66999999999996px + -0.157px / 2);width:120px;text-align:center;top:452.98px;font-size:9.9px;line-height:9.9px;font-weight:700;color:#18a356;letter-spacing:-0.157px;">R$ 88.9K</div>
<div class="abs" style="left:496.17px;top:481px;width:45px;height:53px;border-radius:3px 3px 0 0;background:linear-gradient(180deg,#10a862 0%,#0c9a56 60%,#0b7f45 100%)"></div>
<div class="t" style="left:calc(488.66999999999996px + -0.7px / 2);width:60px;text-align:center;top:539.63px;font-size:10.2px;line-height:10.2px;font-weight:400;color:#6b7a94;letter-spacing:-0.7px;-webkit-text-stroke:.1px #6b7a94;">Qua</div>
<div class="t" style="left:calc(488.66999999999996px + -0.175px / 2);width:60px;text-align:center;top:552.43px;font-size:10.2px;line-height:10.2px;font-weight:400;color:#6b7a94;letter-spacing:-0.175px;-webkit-text-stroke:.1px #6b7a94;">24/12</div>
<div class="t" style="left:calc(604.8399999999999px + -0.486px / 2);width:120px;text-align:center;top:452.98px;font-size:9.9px;line-height:9.9px;font-weight:700;color:#18a356;letter-spacing:-0.486px;">R$ 61.6K</div>
<div class="abs" style="left:642.34px;top:497px;width:45px;height:37px;border-radius:3px 3px 0 0;background:linear-gradient(180deg,#10a862 0%,#0c9a56 60%,#0b7f45 100%)"></div>
<div class="t" style="left:calc(634.8399999999999px + -0.5px / 2);width:60px;text-align:center;top:539.63px;font-size:10.2px;line-height:10.2px;font-weight:400;color:#6b7a94;letter-spacing:-0.5px;-webkit-text-stroke:.1px #6b7a94;">Qui</div>
<div class="t" style="left:calc(634.8399999999999px + -0.175px / 2);width:60px;text-align:center;top:552.43px;font-size:10.2px;line-height:10.2px;font-weight:400;color:#6b7a94;letter-spacing:-0.175px;-webkit-text-stroke:.1px #6b7a94;">25/12</div>
<div class="t" style="left:calc(751.01px + -0.214px / 2);width:120px;text-align:center;top:452.98px;font-size:9.9px;line-height:9.9px;font-weight:700;color:#18a356;letter-spacing:-0.214px;">R$ 57.9K</div>
<div class="abs" style="left:788.51px;top:499px;width:45px;height:35px;border-radius:3px 3px 0 0;background:linear-gradient(180deg,#10a862 0%,#0c9a56 60%,#0b7f45 100%)"></div>
<div class="t" style="left:calc(781.01px + -0.8px / 2);width:60px;text-align:center;top:539.63px;font-size:10.2px;line-height:10.2px;font-weight:400;color:#6b7a94;letter-spacing:-0.8px;-webkit-text-stroke:.1px #6b7a94;">Sex</div>
<div class="t" style="left:calc(781.01px + -0.175px / 2);width:60px;text-align:center;top:552.43px;font-size:10.2px;line-height:10.2px;font-weight:400;color:#6b7a94;letter-spacing:-0.175px;-webkit-text-stroke:.1px #6b7a94;">26/12</div>
<div class="t" style="left:calc(897.18px + -0.263px / 2);width:120px;text-align:center;top:452.98px;font-size:9.9px;line-height:9.9px;font-weight:700;color:#18a356;letter-spacing:-0.263px;">R$ 105.6K</div>
<div class="abs" style="left:934.68px;top:471px;width:45px;height:63px;border-radius:3px 3px 0 0;background:linear-gradient(180deg,#10a862 0%,#0c9a56 60%,#0b7f45 100%)"></div>
<div class="t" style="left:calc(927.18px + -0.4px / 2);width:60px;text-align:center;top:539.63px;font-size:10.2px;line-height:10.2px;font-weight:400;color:#6b7a94;letter-spacing:-0.4px;-webkit-text-stroke:.1px #6b7a94;">Sáb</div>
<div class="t" style="left:calc(927.18px + -0.175px / 2);width:60px;text-align:center;top:552.43px;font-size:10.2px;line-height:10.2px;font-weight:400;color:#6b7a94;letter-spacing:-0.175px;-webkit-text-stroke:.1px #6b7a94;">27/12</div>
<div class="t" style="left:calc(1043.35px + 0.45px / 2);width:120px;text-align:center;top:452.98px;font-size:9.9px;line-height:9.9px;font-weight:700;color:#18a356;letter-spacing:0.45px;">R$ 0,00</div>
<div class="abs" style="left:1080.85px;top:530px;width:45px;height:4px;border-radius:3px 3px 0 0;background:linear-gradient(180deg,#10a862 0%,#0c9a56 60%,#0b7f45 100%)"></div>
<div class="t" style="left:calc(1073.35px + 0.25px / 2);width:60px;text-align:center;top:539.63px;font-size:10.2px;line-height:10.2px;font-weight:400;color:#6b7a94;letter-spacing:0.25px;-webkit-text-stroke:.1px #6b7a94;">Dom</div>
<div class="t" style="left:calc(1073.35px + -0.175px / 2);width:60px;text-align:center;top:552.43px;font-size:10.2px;line-height:10.2px;font-weight:400;color:#6b7a94;letter-spacing:-0.175px;-webkit-text-stroke:.1px #6b7a94;">28/12</div>
<div class="t" style="left:calc(1189.52px + -0.25px / 2);width:120px;text-align:center;top:452.98px;font-size:9.9px;line-height:9.9px;font-weight:700;color:#18a356;letter-spacing:-0.25px;">R$ 7.5K</div>
<div class="abs" style="left:1227.02px;top:529px;width:45px;height:5px;border-radius:3px 3px 0 0;background:linear-gradient(180deg,#10a862 0%,#0c9a56 60%,#0b7f45 100%)"></div>
<div class="t" style="left:calc(1219.52px + -0.1px / 2);width:60px;text-align:center;top:539.63px;font-size:10.2px;line-height:10.2px;font-weight:400;color:#6b7a94;letter-spacing:-0.1px;-webkit-text-stroke:.1px #6b7a94;">Seg</div>
<div class="t" style="left:calc(1219.52px + -0.175px / 2);width:60px;text-align:center;top:552.43px;font-size:10.2px;line-height:10.2px;font-weight:400;color:#6b7a94;letter-spacing:-0.175px;-webkit-text-stroke:.1px #6b7a94;">29/12</div>
<div class="card" style="left:1349px;top:392px;width:517px;height:221px;overflow:hidden"><div class="chead" style="height:39px"></div></div>
<svg class="ico" style="left:1364.5px;top:405px" width="13" height="13" viewBox="0 0 16 16"><path fill="#f07c0c" d="M2.5.5A.5.5 0 0 1 3 0h10a.5.5 0 0 1 .5.5q0 .807-.034 1.536a3 3 0 1 1-1.133 5.89c-.79 1.865-1.878 2.777-2.833 3.011v2.173l1.425.356c.194.048.377.135.537.255L13.3 15.1a.5.5 0 0 1-.3.9H3a.5.5 0 0 1-.3-.9l1.838-1.379c.16-.12.343-.207.537-.255L6.5 13.11v-2.173c-.955-.234-2.043-1.146-2.833-3.012a3 3 0 1 1-1.132-5.89A33 33 0 0 1 2.5.5m.099 2.54a2 2 0 0 0 .72 3.935c-.333-1.05-.588-2.346-.72-3.935m10.083 3.935a2 2 0 0 0 .72-3.935c-.133 1.59-.388 2.885-.72 3.935"/></svg>
<div class="t" style="left:1384.5px;top:406.59px;font-size:12.6px;line-height:12.6px;font-weight:400;color:#0f172a;letter-spacing:-0.058px;-webkit-text-stroke:.45px #0f172a;">Mais Vendidos</div>
<div class="abs" style="left:1350.5px;top:432px;width:514.5px;height:180.5px;overflow:hidden">
<div class="abs" style="left:14.5px;top:17.5px;width:19px;height:20px;border-radius:5px;background:#fef3c7;color:#b45309;font-size:10.5px;font-weight:700;text-align:center;line-height:20px">1</div>
<div class="t" style="left:41.5px;top:21.99px;font-size:12.6px;line-height:12.6px;font-weight:400;color:#1e293b;letter-spacing:-0.35px;-webkit-text-stroke:.15px #1e293b;">Roteador Wi-Fi 6 TP-Link AX1500</div>
<div class="t" style="left:calc(429.9000000000001px + -0.175px);width:60px;text-align:right;top:23.18px;font-size:11.2px;line-height:11.2px;font-weight:400;color:#64748b;letter-spacing:-0.175px;-webkit-text-stroke:.15px #64748b;">43 un</div>
<div class="abs" style="left:13.5px;top:45.1px;width:477px;height:1px;background:#f1f4f8"></div>
<div class="abs" style="left:14.5px;top:52.6px;width:19px;height:20px;border-radius:5px;background:#e2e8f0;color:#334155;font-size:10.5px;font-weight:700;text-align:center;line-height:20px">2</div>
<div class="t" style="left:41.5px;top:57.09px;font-size:12.6px;line-height:12.6px;font-weight:400;color:#1e293b;letter-spacing:-0.456px;-webkit-text-stroke:.15px #1e293b;">Smartphone Xiaomi Redmi Note 12 128GB</div>
<div class="t" style="left:calc(429.9000000000001px + -0.175px);width:60px;text-align:right;top:58.28px;font-size:11.2px;line-height:11.2px;font-weight:400;color:#64748b;letter-spacing:-0.175px;-webkit-text-stroke:.15px #64748b;">42 un</div>
<div class="abs" style="left:13.5px;top:80.2px;width:477px;height:1px;background:#f1f4f8"></div>
<div class="abs" style="left:14.5px;top:87.7px;width:19px;height:20px;border-radius:5px;background:#fed7aa;color:#c2410c;font-size:10.5px;font-weight:700;text-align:center;line-height:20px">3</div>
<div class="t" style="left:41.5px;top:92.19px;font-size:12.6px;line-height:12.6px;font-weight:400;color:#1e293b;letter-spacing:0.027px;-webkit-text-stroke:.15px #1e293b;">Suporte Notebook Ergonômico</div>
<div class="t" style="left:calc(429.9000000000001px + -0.175px);width:60px;text-align:right;top:93.38px;font-size:11.2px;line-height:11.2px;font-weight:400;color:#64748b;letter-spacing:-0.175px;-webkit-text-stroke:.15px #64748b;">39 un</div>
<div class="abs" style="left:13.5px;top:115.3px;width:477px;height:1px;background:#f1f4f8"></div>
<div class="abs" style="left:14.5px;top:122.8px;width:19px;height:20px;border-radius:5px;background:#f1f5f9;color:#64748b;font-size:10.5px;font-weight:700;text-align:center;line-height:20px">4</div>
<div class="t" style="left:41.5px;top:127.29px;font-size:12.6px;line-height:12.6px;font-weight:400;color:#1e293b;letter-spacing:-0.588px;-webkit-text-stroke:.15px #1e293b;">Monitor LG 24" Full HD IPS</div>
<div class="t" style="left:calc(429.9000000000001px + -0.175px);width:60px;text-align:right;top:128.48px;font-size:11.2px;line-height:11.2px;font-weight:400;color:#64748b;letter-spacing:-0.175px;-webkit-text-stroke:.15px #64748b;">39 un</div>
<div class="abs" style="left:13.5px;top:150.4px;width:477px;height:1px;background:#f1f4f8"></div>
<div class="abs" style="left:14.5px;top:157.9px;width:19px;height:20px;border-radius:5px;background:#f1f5f9;color:#64748b;font-size:10.5px;font-weight:700;text-align:center;line-height:20px">5</div>
<div class="t" style="left:41.5px;top:162.39px;font-size:12.6px;line-height:12.6px;font-weight:400;color:#1e293b;letter-spacing:-0.327px;-webkit-text-stroke:.15px #1e293b;">Teclado e Mouse Sem Fio Logitech MK270</div>
<div class="t" style="left:calc(429.9000000000001px + -0.175px);width:60px;text-align:right;top:163.58px;font-size:11.2px;line-height:11.2px;font-weight:400;color:#64748b;letter-spacing:-0.175px;-webkit-text-stroke:.15px #64748b;">38 un</div>
</div>
<div class="arr up" style="left:1856px;top:435px"></div>
<div class="sbar" style="left:1857px;top:444px;width:6px;height:143px"></div>
<div class="arr dn" style="left:1856px;top:605px"></div>
<div class="card" style="left:287px;top:627px;width:1048px;height:241px;overflow:hidden"><div class="chead" style="height:51px"></div></div>
<svg class="ico" style="left:303px;top:647px" width="12" height="13" viewBox="0 0 12 13"><rect x=".6" y=".6" width="10.8" height="11.8" fill="#fff" stroke="#16a34a" stroke-width="1.2"/><path stroke="#16a34a" stroke-width="1" d="M2.2 3.4h5.5M2.2 5.4h5.5M2.2 7.5h5.5M8.6 3.4h1.2M8.6 5.4h1.2M8.6 7.5h1.2"/><rect x="2.2" y="4.6" width="5.5" height="2.3" fill="#43b96f" opacity=".8"/></svg>
<div class="t" style="left:322px;top:647.49px;font-size:12.6px;line-height:12.6px;font-weight:400;color:#0f172a;letter-spacing:-0.1px;-webkit-text-stroke:.45px #0f172a;">Últimas Vendas</div>
<div class="t" style="left:calc(1228.6px + 0.037px);width:80px;text-align:right;top:646.67px;font-size:12.5px;line-height:12.5px;font-weight:400;color:#64748b;letter-spacing:0.037px;-webkit-text-stroke:.2px #64748b;">Ver todas</div>
<div class="abs" style="left:288px;top:679px;width:1046px;height:178px;overflow:hidden">
<div class="t" style="left:15px;top:20.35px;font-size:13px;line-height:13px;font-weight:400;color:#0f172a;letter-spacing:0.2px;-webkit-text-stroke:.45px #0f172a;">#253070</div>
<div class="t" style="left:15px;top:40.33px;font-size:12.2px;line-height:12.2px;font-weight:400;color:#6b7a94;letter-spacing:-0.344px;">Consumidor</div>
<div class="t" style="left:calc(871.1px + 0.11px);width:150px;text-align:right;top:29.41px;font-size:13.4px;line-height:13.4px;font-weight:700;color:#119c4c;letter-spacing:0.11px;">R$ 7.495,00</div>
<div class="abs" style="left:15px;top:61px;width:1006px;height:1px;background:#f1f4f8"></div>
<div class="t" style="left:15px;top:71.45px;font-size:13px;line-height:13px;font-weight:400;color:#0f172a;letter-spacing:0.017px;-webkit-text-stroke:.45px #0f172a;">#249438</div>
<div class="t" style="left:15px;top:91.43px;font-size:12.2px;line-height:12.2px;font-weight:400;color:#6b7a94;letter-spacing:-0.344px;">Consumidor</div>
<div class="t" style="left:calc(871.1px + -0.525px);width:150px;text-align:right;top:80.51px;font-size:13.4px;line-height:13.4px;font-weight:700;color:#119c4c;letter-spacing:-0.525px;">R$ 110,33</div>
<div class="abs" style="left:15px;top:112px;width:1006px;height:1px;background:#f1f4f8"></div>
<div class="t" style="left:15px;top:122.55px;font-size:13px;line-height:13px;font-weight:400;color:#0f172a;letter-spacing:-0.55px;-webkit-text-stroke:.45px #0f172a;">#247514</div>
<div class="t" style="left:15px;top:142.53px;font-size:12.2px;line-height:12.2px;font-weight:400;color:#6b7a94;letter-spacing:-0.482px;">Bruno Soares</div>
<div class="t" style="left:calc(871.1px + -0.213px);width:150px;text-align:right;top:131.61px;font-size:13.4px;line-height:13.4px;font-weight:700;color:#119c4c;letter-spacing:-0.213px;">R$ 352,93</div>
<div class="abs" style="left:15px;top:163px;width:1006px;height:1px;background:#f1f4f8"></div>
<div class="t" style="left:15px;top:173.65px;font-size:13px;line-height:13px;font-weight:400;color:#0f172a;letter-spacing:0.083px;-webkit-text-stroke:.45px #0f172a;">#238605</div>
<div class="t" style="left:15px;top:193.63px;font-size:12.2px;line-height:12.2px;font-weight:400;color:#6b7a94;letter-spacing:-0.344px;">Consumidor</div>
<div class="t" style="left:calc(871.1px + -0.143px);width:150px;text-align:right;top:182.71px;font-size:13.4px;line-height:13.4px;font-weight:700;color:#119c4c;letter-spacing:-0.143px;">R$ 89,90</div>
</div>
<div class="arr up" style="left:1325px;top:682px"></div>
<div class="sbar" style="left:1326px;top:691px;width:6px;height:102px"></div>
<div class="arr dn" style="left:1325px;top:852px"></div>
<div class="card" style="left:1349px;top:627px;width:517px;height:241px;overflow:hidden"><div class="chead" style="height:41px"></div></div>
<svg class="ico" style="left:1364px;top:641px" width="14" height="14" viewBox="0 0 16 16"><path fill="#e02424" d="M3 2.5a2.5 2.5 0 0 1 5 0 2.5 2.5 0 0 1 5 0v.006c0 .07 0 .27-.038.494H15a1 1 0 0 1 1 1v1a1 1 0 0 1-1 1H1a1 1 0 0 1-1-1V4a1 1 0 0 1 1-1h2.038A3 3 0 0 1 3 2.506zm1.068.5H7v-.5a1.5 1.5 0 1 0-3 0c0 .085.002.274.045.43zM9 3h2.932l.023-.07c.043-.156.045-.345.045-.43a1.5 1.5 0 0 0-3 0zm6 4v7.5a1.5 1.5 0 0 1-1.5 1.5H9V7zM2.5 16A1.5 1.5 0 0 1 1 14.5V7h6v9z"/></svg>
<div class="t" style="left:1384.5px;top:642.49px;font-size:12.6px;line-height:12.6px;font-weight:400;color:#0f172a;letter-spacing:-0.043px;-webkit-text-stroke:.45px #0f172a;">Aniversariantes</div>
<div class="abs" style="left:1814px;top:639px;width:37px;height:18px;border-radius:7px;background:#0757bf;color:#fff;font-size:11.5px;font-weight:400;-webkit-text-stroke:.45px #fff;text-align:center;line-height:19px">190</div>
<div class="abs" style="left:1350.5px;top:669px;width:514.5px;height:198px;overflow:hidden">
<svg class="ico" style="left:14px;top:31.5px" width="14" height="15" viewBox="0 0 16 16"><path fill="#e02424" d="M3 2.5a2.5 2.5 0 0 1 5 0 2.5 2.5 0 0 1 5 0v.006c0 .07 0 .27-.038.494H15a1 1 0 0 1 1 1v2a1 1 0 0 1-1 1v7.5a1.5 1.5 0 0 1-1.5 1.5h-11A1.5 1.5 0 0 1 1 14.5V7a1 1 0 0 1-1-1V4a1 1 0 0 1 1-1h2.038A3 3 0 0 1 3 2.506zm1.068.5H7v-.5a1.5 1.5 0 1 0-3 0c0 .085.002.274.045.43zM9 3h2.932l.023-.07c.043-.156.045-.345.045-.43a1.5 1.5 0 0 0-3 0zM1 4v2h6V4zm8 0v2h6V4zm5 3H9v8h4.5a.5.5 0 0 0 .5-.5zm-7 8V7H2v7.5a.5.5 0 0 0 .5.5z"/></svg>
<div class="t" style="left:35.3px;top:20.75px;font-size:13px;line-height:13px;font-weight:400;color:#0f172a;letter-spacing:-0.054px;-webkit-text-stroke:.45px #0f172a;">Amanda Barbosa</div>
<div class="t" style="left:35.3px;top:44.56px;font-size:12.4px;line-height:12.4px;font-weight:400;color:#7b8aa3;letter-spacing:-0.25px;">29/12</div>
<div class="abs" style="left:67.7px;top:41.4px;width:48.6px;height:17.5px;border-radius:6px;background:#e42727;color:#fff;font-size:10.3px;font-weight:700;text-align:center;line-height:19.5px">HOJE!</div>
<div class="abs" style="left:456.5px;top:24.0px;width:34px;height:29px;border-radius:6px;background:linear-gradient(135deg,#13a35a,#0b7d45);box-shadow:0 3px 6px rgba(16,160,90,.22)"><svg style="position:absolute;left:11px;top:7.2px" width="12.5" height="12.5" viewBox="0 0 16 16"><path fill="#fff" d="M13.601 2.326A7.85 7.85 0 0 0 7.994 0C3.627 0 .068 3.558.064 7.926c0 1.399.366 2.76 1.057 3.965L0 16l4.204-1.102a7.9 7.9 0 0 0 3.79.965h.004c4.368 0 7.926-3.558 7.93-7.93A7.9 7.9 0 0 0 13.6 2.326zM7.994 14.521a6.6 6.6 0 0 1-3.356-.92l-.24-.144-2.494.654.666-2.433-.156-.251a6.56 6.56 0 0 1-1.007-3.505c0-3.626 2.957-6.584 6.591-6.584a6.56 6.56 0 0 1 4.66 1.931 6.56 6.56 0 0 1 1.928 4.66c-.004 3.639-2.961 6.592-6.592 6.592m3.615-4.934c-.197-.099-1.17-.578-1.353-.646-.182-.065-.315-.099-.445.099-.133.197-.513.646-.627.775-.114.133-.232.148-.43.05-.197-.1-.836-.308-1.592-.985-.59-.525-.985-1.175-1.103-1.372-.114-.198-.011-.304.088-.403.087-.088.197-.232.296-.346.1-.114.133-.198.198-.33.065-.134.034-.248-.015-.347-.05-.099-.445-1.076-.612-1.47-.16-.389-.323-.335-.445-.34-.114-.007-.247-.007-.38-.007a.73.73 0 0 0-.529.247c-.182.198-.691.677-.691 1.654s.71 1.916.81 2.049c.098.133 1.394 2.132 3.383 2.992.47.205.84.326 1.129.418.475.152.904.129 1.246.08.38-.058 1.171-.48 1.338-.943.164-.464.164-.86.114-.943-.049-.084-.182-.133-.38-.232"/></svg></div>
<div class="abs" style="left:13.5px;top:66.0px;width:477px;height:1px;background:#dce2eb"></div>
<svg class="ico" style="left:14px;top:88.4px" width="14" height="15" viewBox="0 0 16 16"><path fill="#e02424" d="M3 2.5a2.5 2.5 0 0 1 5 0 2.5 2.5 0 0 1 5 0v.006c0 .07 0 .27-.038.494H15a1 1 0 0 1 1 1v2a1 1 0 0 1-1 1v7.5a1.5 1.5 0 0 1-1.5 1.5h-11A1.5 1.5 0 0 1 1 14.5V7a1 1 0 0 1-1-1V4a1 1 0 0 1 1-1h2.038A3 3 0 0 1 3 2.506zm1.068.5H7v-.5a1.5 1.5 0 1 0-3 0c0 .085.002.274.045.43zM9 3h2.932l.023-.07c.043-.156.045-.345.045-.43a1.5 1.5 0 0 0-3 0zM1 4v2h6V4zm8 0v2h6V4zm5 3H9v8h4.5a.5.5 0 0 0 .5-.5zm-7 8V7H2v7.5a.5.5 0 0 0 .5.5z"/></svg>
<div class="t" style="left:35.3px;top:77.65px;font-size:13px;line-height:13px;font-weight:400;color:#0f172a;letter-spacing:-0.047px;-webkit-text-stroke:.45px #0f172a;">Amanda Fernandes</div>
<div class="t" style="left:35.3px;top:101.46px;font-size:12.4px;line-height:12.4px;font-weight:400;color:#7b8aa3;letter-spacing:-0.25px;">29/12</div>
<div class="abs" style="left:67.7px;top:98.3px;width:48.6px;height:17.5px;border-radius:6px;background:#e42727;color:#fff;font-size:10.3px;font-weight:700;text-align:center;line-height:19.5px">HOJE!</div>
<div class="abs" style="left:456.5px;top:80.9px;width:34px;height:29px;border-radius:6px;background:linear-gradient(135deg,#13a35a,#0b7d45);box-shadow:0 3px 6px rgba(16,160,90,.22)"><svg style="position:absolute;left:11px;top:7.2px" width="12.5" height="12.5" viewBox="0 0 16 16"><path fill="#fff" d="M13.601 2.326A7.85 7.85 0 0 0 7.994 0C3.627 0 .068 3.558.064 7.926c0 1.399.366 2.76 1.057 3.965L0 16l4.204-1.102a7.9 7.9 0 0 0 3.79.965h.004c4.368 0 7.926-3.558 7.93-7.93A7.9 7.9 0 0 0 13.6 2.326zM7.994 14.521a6.6 6.6 0 0 1-3.356-.92l-.24-.144-2.494.654.666-2.433-.156-.251a6.56 6.56 0 0 1-1.007-3.505c0-3.626 2.957-6.584 6.591-6.584a6.56 6.56 0 0 1 4.66 1.931 6.56 6.56 0 0 1 1.928 4.66c-.004 3.639-2.961 6.592-6.592 6.592m3.615-4.934c-.197-.099-1.17-.578-1.353-.646-.182-.065-.315-.099-.445.099-.133.197-.513.646-.627.775-.114.133-.232.148-.43.05-.197-.1-.836-.308-1.592-.985-.59-.525-.985-1.175-1.103-1.372-.114-.198-.011-.304.088-.403.087-.088.197-.232.296-.346.1-.114.133-.198.198-.33.065-.134.034-.248-.015-.347-.05-.099-.445-1.076-.612-1.47-.16-.389-.323-.335-.445-.34-.114-.007-.247-.007-.38-.007a.73.73 0 0 0-.529.247c-.182.198-.691.677-.691 1.654s.71 1.916.81 2.049c.098.133 1.394 2.132 3.383 2.992.47.205.84.326 1.129.418.475.152.904.129 1.246.08.38-.058 1.171-.48 1.338-.943.164-.464.164-.86.114-.943-.049-.084-.182-.133-.38-.232"/></svg></div>
<div class="abs" style="left:13.5px;top:122.9px;width:477px;height:1px;background:#dce2eb"></div>
<svg class="ico" style="left:14px;top:145.3px" width="14" height="15" viewBox="0 0 16 16"><path fill="#e02424" d="M3 2.5a2.5 2.5 0 0 1 5 0 2.5 2.5 0 0 1 5 0v.006c0 .07 0 .27-.038.494H15a1 1 0 0 1 1 1v2a1 1 0 0 1-1 1v7.5a1.5 1.5 0 0 1-1.5 1.5h-11A1.5 1.5 0 0 1 1 14.5V7a1 1 0 0 1-1-1V4a1 1 0 0 1 1-1h2.038A3 3 0 0 1 3 2.506zm1.068.5H7v-.5a1.5 1.5 0 1 0-3 0c0 .085.002.274.045.43zM9 3h2.932l.023-.07c.043-.156.045-.345.045-.43a1.5 1.5 0 0 0-3 0zM1 4v2h6V4zm8 0v2h6V4zm5 3H9v8h4.5a.5.5 0 0 0 .5-.5zm-7 8V7H2v7.5a.5.5 0 0 0 .5.5z"/></svg>
<div class="t" style="left:35.3px;top:134.55px;font-size:13px;line-height:13px;font-weight:400;color:#0f172a;letter-spacing:-0.1px;-webkit-text-stroke:.45px #0f172a;">Amanda Soares</div>
<div class="t" style="left:35.3px;top:158.36px;font-size:12.4px;line-height:12.4px;font-weight:400;color:#7b8aa3;letter-spacing:-0.25px;">29/12</div>
<div class="abs" style="left:67.7px;top:155.2px;width:48.6px;height:17.5px;border-radius:6px;background:#e42727;color:#fff;font-size:10.3px;font-weight:700;text-align:center;line-height:19.5px">HOJE!</div>
<div class="abs" style="left:456.5px;top:137.8px;width:34px;height:29px;border-radius:6px;background:linear-gradient(135deg,#13a35a,#0b7d45);box-shadow:0 3px 6px rgba(16,160,90,.22)"><svg style="position:absolute;left:11px;top:7.2px" width="12.5" height="12.5" viewBox="0 0 16 16"><path fill="#fff" d="M13.601 2.326A7.85 7.85 0 0 0 7.994 0C3.627 0 .068 3.558.064 7.926c0 1.399.366 2.76 1.057 3.965L0 16l4.204-1.102a7.9 7.9 0 0 0 3.79.965h.004c4.368 0 7.926-3.558 7.93-7.93A7.9 7.9 0 0 0 13.6 2.326zM7.994 14.521a6.6 6.6 0 0 1-3.356-.92l-.24-.144-2.494.654.666-2.433-.156-.251a6.56 6.56 0 0 1-1.007-3.505c0-3.626 2.957-6.584 6.591-6.584a6.56 6.56 0 0 1 4.66 1.931 6.56 6.56 0 0 1 1.928 4.66c-.004 3.639-2.961 6.592-6.592 6.592m3.615-4.934c-.197-.099-1.17-.578-1.353-.646-.182-.065-.315-.099-.445.099-.133.197-.513.646-.627.775-.114.133-.232.148-.43.05-.197-.1-.836-.308-1.592-.985-.59-.525-.985-1.175-1.103-1.372-.114-.198-.011-.304.088-.403.087-.088.197-.232.296-.346.1-.114.133-.198.198-.33.065-.134.034-.248-.015-.347-.05-.099-.445-1.076-.612-1.47-.16-.389-.323-.335-.445-.34-.114-.007-.247-.007-.38-.007a.73.73 0 0 0-.529.247c-.182.198-.691.677-.691 1.654s.71 1.916.81 2.049c.098.133 1.394 2.132 3.383 2.992.47.205.84.326 1.129.418.475.152.904.129 1.246.08.38-.058 1.171-.48 1.338-.943.164-.464.164-.86.114-.943-.049-.084-.182-.133-.38-.232"/></svg></div>
<div class="abs" style="left:13.5px;top:179.8px;width:477px;height:1px;background:#dce2eb"></div>
<svg class="ico" style="left:14px;top:202.2px" width="14" height="15" viewBox="0 0 16 16"><path fill="#e02424" d="M3 2.5a2.5 2.5 0 0 1 5 0 2.5 2.5 0 0 1 5 0v.006c0 .07 0 .27-.038.494H15a1 1 0 0 1 1 1v2a1 1 0 0 1-1 1v7.5a1.5 1.5 0 0 1-1.5 1.5h-11A1.5 1.5 0 0 1 1 14.5V7a1 1 0 0 1-1-1V4a1 1 0 0 1 1-1h2.038A3 3 0 0 1 3 2.506zm1.068.5H7v-.5a1.5 1.5 0 1 0-3 0c0 .085.002.274.045.43zM9 3h2.932l.023-.07c.043-.156.045-.345.045-.43a1.5 1.5 0 0 0-3 0zM1 4v2h6V4zm8 0v2h6V4zm5 3H9v8h4.5a.5.5 0 0 0 .5-.5zm-7 8V7H2v7.5a.5.5 0 0 0 .5.5z"/></svg>
<div class="t" style="left:35.3px;top:191.45px;font-size:13px;line-height:13px;font-weight:400;color:#0f172a;letter-spacing:-0.217px;-webkit-text-stroke:.45px #0f172a;">Ana Fernandes</div>
<div class="t" style="left:35.3px;top:215.26px;font-size:12.4px;line-height:12.4px;font-weight:400;color:#7b8aa3;letter-spacing:-0.25px;">29/12</div>
<div class="abs" style="left:67.7px;top:212.1px;width:48.6px;height:17.5px;border-radius:6px;background:#e42727;color:#fff;font-size:10.3px;font-weight:700;text-align:center;line-height:19.5px">HOJE!</div>
<div class="abs" style="left:456.5px;top:194.7px;width:34px;height:29px;border-radius:6px;background:linear-gradient(135deg,#13a35a,#0b7d45);box-shadow:0 3px 6px rgba(16,160,90,.22)"><svg style="position:absolute;left:11px;top:7.2px" width="12.5" height="12.5" viewBox="0 0 16 16"><path fill="#fff" d="M13.601 2.326A7.85 7.85 0 0 0 7.994 0C3.627 0 .068 3.558.064 7.926c0 1.399.366 2.76 1.057 3.965L0 16l4.204-1.102a7.9 7.9 0 0 0 3.79.965h.004c4.368 0 7.926-3.558 7.93-7.93A7.9 7.9 0 0 0 13.6 2.326zM7.994 14.521a6.6 6.6 0 0 1-3.356-.92l-.24-.144-2.494.654.666-2.433-.156-.251a6.56 6.56 0 0 1-1.007-3.505c0-3.626 2.957-6.584 6.591-6.584a6.56 6.56 0 0 1 4.66 1.931 6.56 6.56 0 0 1 1.928 4.66c-.004 3.639-2.961 6.592-6.592 6.592m3.615-4.934c-.197-.099-1.17-.578-1.353-.646-.182-.065-.315-.099-.445.099-.133.197-.513.646-.627.775-.114.133-.232.148-.43.05-.197-.1-.836-.308-1.592-.985-.59-.525-.985-1.175-1.103-1.372-.114-.198-.011-.304.088-.403.087-.088.197-.232.296-.346.1-.114.133-.198.198-.33.065-.134.034-.248-.015-.347-.05-.099-.445-1.076-.612-1.47-.16-.389-.323-.335-.445-.34-.114-.007-.247-.007-.38-.007a.73.73 0 0 0-.529.247c-.182.198-.691.677-.691 1.654s.71 1.916.81 2.049c.098.133 1.394 2.132 3.383 2.992.47.205.84.326 1.129.418.475.152.904.129 1.246.08.38-.058 1.171-.48 1.338-.943.164-.464.164-.86.114-.943-.049-.084-.182-.133-.38-.232"/></svg></div>
</div>
<div class="arr up" style="left:1856px;top:671px"></div>
<div class="sbar" style="left:1857px;top:680.5px;width:6px;height:11.5px"></div>
<div class="arr dn" style="left:1856px;top:859px"></div>
<div class="t" style="left:calc(926.5px + 0.05px / 2);width:300px;text-align:center;top:905.25px;font-size:11px;line-height:11px;font-weight:400;color:#7b8aa3;letter-spacing:0.05px;">Baleon ERP © Todos os Direitos Reservados</div>
<div id="rstrip" class="abs"></div>
</body>
</html>
